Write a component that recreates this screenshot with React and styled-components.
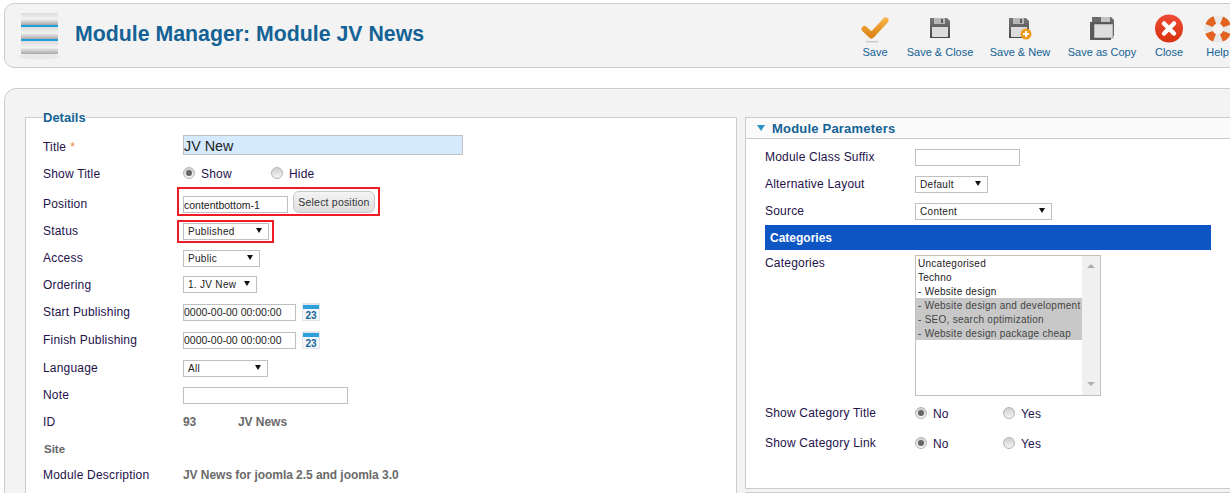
import React from "react";
import styled, { createGlobalStyle } from "styled-components";

const GlobalStyle = createGlobalStyle`
  html, body {
    margin: 0;
    padding: 0;
    background: #fff;
    overflow: hidden;
  }
  * {
    box-sizing: border-box;
  }
`;

const Page = styled.div`
  width: 1230px;
  height: 493px;
  overflow: hidden;
  padding: 3px 0 0 4px;
  font-family: "Liberation Sans", Arial, sans-serif;
  font-size: 12px;
  color: #24124a;
`;

const Header = styled.header`
  width: 1238px;
  height: 65px;
  display: flex;
  align-items: center;
  justify-content: space-between;
  background: #f3f3f3;
  border: 1px solid #ccc;
  border-radius: 10px;
`;

const TitleBlock = styled.div`
  display: flex;
  align-items: center;
  gap: 14px;
  padding-left: 12px;
`;

const PageTitle = styled.h1`
  margin: 0 0 2px;
  font-size: 21.3px;
  font-weight: bold;
  color: #146295;
`;

const Toolbar = styled.nav`
  display: flex;
`;

const ToolItem = styled.a`
  width: ${(p) => p.$w}px;
  height: 64px;
  padding-top: 9px;
  display: flex;
  flex-direction: column;
  align-items: center;
  font-size: 11px;
  color: #146295;
  white-space: nowrap;
`;

const ToolIcon = styled.span`
  height: 33px;
  display: flex;
  align-items: center;
  justify-content: center;
`;

const Main = styled.main`
  width: 1238px;
  height: 420px;
  margin-top: 20px;
  padding: 21px 0 0 20px;
  display: flex;
  align-items: flex-start;
  gap: 8px;
  background: #f3f3f3;
  border: 1px solid #ccc;
  border-radius: 12px;
`;

const Fieldset = styled.fieldset`
  width: 712px;
  height: 400px;
  flex-shrink: 0;
  margin: 0;
  padding: 6px 0 0 17px;
  background: #fff;
  border: 1px solid #ccc;
`;

const Legend = styled.legend`
  margin-left: 0;
  padding: 0;
  font-size: 13px;
  font-weight: bold;
  color: #146295;
`;

const Row = styled.div`
  height: ${(p) => p.$h}px;
  display: flex;
  align-items: center;
`;

const Label = styled.label`
  width: ${(p) => p.$w}px;
  flex-shrink: 0;
  padding-top: ${(p) => p.$drop || 0}px;
  padding-bottom: ${(p) => p.$raise || 0}px;
  letter-spacing: 0.2px;
`;

const Star = styled.span`
  margin-left: 4px;
  color: #ee8a3c;
`;

const TextInput = styled.input`
  width: ${(p) => p.$w}px;
  height: ${(p) => p.$height || 17}px;
  padding: ${(p) => p.$padTop || 0}px 0 0;
  background: ${(p) => p.$bg || "#fff"};
  border: 1px solid #c0c0c0;
  border-radius: 0;
  outline: none;
  font-family: "Liberation Sans", Arial, sans-serif;
  font-size: ${(p) => p.$size || 10.5}px;
  color: #222;
`;

const SelectBox = styled.div`
  width: ${(p) => p.$w}px;
  height: 17px;
  padding: 0 4px;
  display: flex;
  align-items: center;
  justify-content: space-between;
  background: #fff;
  border: 1px solid #c0c0c0;
  font-size: 10px;
  letter-spacing: 0.3px;
  color: #222;
`;

const Arrow = styled.span`
  width: 0;
  height: 0;
  margin-right: 2px;
  margin-bottom: 2px;
  border-left: 3px solid transparent;
  border-right: 3px solid transparent;
  border-top: 5px solid #111;
`;

const Highlight = styled.div`
  margin-left: -6px;
  padding: ${(p) => p.$pad};
  display: flex;
  align-items: flex-end;
  gap: 5px;
  border: 2px solid #ee1c25;
`;

const PositionButton = styled.button`
  width: 82px;
  height: 22px;
  padding: 0;
  background: linear-gradient(#f4f4f4, #dedede);
  border: 1px solid #c8c8c8;
  border-radius: 6px;
  font-family: "Liberation Sans", Arial, sans-serif;
  font-size: 10.5px;
  letter-spacing: 0.2px;
  color: #333;
`;

const RadioDot = styled.span`
  width: 12px;
  height: 12px;
  flex-shrink: 0;
  display: flex;
  align-items: center;
  justify-content: center;
  background: linear-gradient(#cfcfcf, #f5f5f5);
  border: 1px solid #b5b5b5;
  border-radius: 50%;

  &::after {
    content: "";
    width: 6px;
    height: 6px;
    border-radius: 50%;
    background: ${(p) => (p.$on ? "#666" : "transparent")};
  }
`;

const RadioItem = styled.span`
  width: ${(p) => p.$w}px;
  display: flex;
  align-items: center;
  gap: 6px;
  letter-spacing: 0.2px;
`;

const RadioText = styled.span`
  padding-top: 2px;
`;

const DateWrap = styled.div`
  display: flex;
  align-items: center;
  gap: 6px;
`;

const StaticValue = styled.span`
  width: ${(p) => p.$w || "auto"};
  font-weight: bold;
  letter-spacing: -0.05px;
  color: #6a6a6a;
`;

const SiteLabel = styled.span`
  padding-left: 1px;
  color: #666;
  font-size: 11.5px;
  font-weight: bold;
`;

const SideColumn = styled.div`
  flex-shrink: 0;
  margin-top: 7px;
  display: flex;
  flex-direction: column;
  gap: 3px;
`;

const Panel = styled.section`
  width: 500px;
  height: ${(p) => p.$h}px;
  background: #fff;
  border: 1px solid #ccc;
`;

const PanelHead = styled.div`
  height: 21px;
  padding-left: 11px;
  display: flex;
  align-items: center;
  gap: 7px;
  background: #fafafa;
  border-bottom: 1px solid #ccc;
  font-size: 13px;
  font-weight: bold;
  letter-spacing: 0.2px;
  color: #146295;
`;

const Caret = styled.span`
  width: 0;
  height: 0;
  border-left: 4.5px solid transparent;
  border-right: 4.5px solid transparent;
  border-top: 6px solid #2a93c8;
`;

const PanelBody = styled.div`
  padding: 5px 0 0 19px;
`;

const SectionBar = styled.div`
  width: 446px;
  height: 25px;
  margin: 0 0 5px;
  padding-left: 5px;
  display: flex;
  align-items: center;
  background: #0c55c3;
  font-weight: bold;
  color: #fff;
`;

const ListRow = styled.div`
  display: flex;
  align-items: flex-start;
`;

const ListBox = styled.div`
  width: 186px;
  height: 141px;
  display: flex;
  background: #fff;
  border: 1px solid #c0c0c0;
`;

const Options = styled.ul`
  flex: 1;
  margin: 0;
  padding: 0;
  list-style: none;
`;

const Option = styled.li`
  height: 14px;
  padding-left: 2px;
  display: flex;
  align-items: center;
  background: ${(p) => (p.$selected ? "#c8c8c8" : "transparent")};
  font-size: 10px;
  letter-spacing: 0.27px;
  white-space: nowrap;
  color: ${(p) => (p.$selected ? "#444" : "#222")};
`;

const Scrollbar = styled.div`
  width: 18px;
  padding: 8px 0 9px;
  display: flex;
  flex-direction: column;
  align-items: center;
  justify-content: space-between;
  background: #f0f0f0;
`;

const ScrollUp = styled.span`
  border-left: 4px solid transparent;
  border-right: 4px solid transparent;
  border-bottom: 4px solid #b0b0b0;
`;

const ScrollDown = styled.span`
  border-left: 4px solid transparent;
  border-right: 4px solid transparent;
  border-top: 4px solid #b0b0b0;
`;

const ModuleIcon = () => (
  <svg width="44" height="50" viewBox="0 0 44 50">
    <defs>
      <linearGradient id="mBar" x1="0" y1="0" x2="0" y2="1">
        <stop offset="0" stopColor="#dcdcdc" />
        <stop offset="0.5" stopColor="#f2f2f2" />
        <stop offset="1" stopColor="#a8a8a8" />
      </linearGradient>
    </defs>
    <ellipse cx="22" cy="45.5" rx="21" ry="3" fill="#e8e8e8" />
    <rect x="4" y="2" width="37" height="12" fill="url(#mBar)" />
    <rect x="4" y="14" width="37" height="2" fill="#1ea0dc" />
    <rect x="4" y="16" width="37" height="12" fill="url(#mBar)" />
    <rect x="4" y="28" width="37" height="2" fill="#1ea0dc" />
    <rect x="4" y="30" width="37" height="13" fill="url(#mBar)" />
  </svg>
);

const CheckIcon = () => (
  <svg width="28" height="27" viewBox="0 0 28 27">
    <defs>
      <linearGradient id="chk" x1="0" y1="0" x2="0" y2="1">
        <stop offset="0" stopColor="#f5b040" />
        <stop offset="1" stopColor="#dd8518" />
      </linearGradient>
    </defs>
    <path
      d="M3.5 13 L10.5 19.5 L24.5 4.5"
      fill="none"
      stroke="url(#chk)"
      strokeWidth="6"
      strokeLinecap="round"
      strokeLinejoin="round"
    />
    <rect x="5" y="25" width="12" height="1.5" fill="#ccc" />
  </svg>
);

const Floppy = ({ id }) => (
  <>
    <defs>
      <linearGradient id={id} x1="0" y1="0" x2="0" y2="1">
        <stop offset="0" stopColor="#787878" />
        <stop offset="1" stopColor="#474747" />
      </linearGradient>
    </defs>
    <path d="M1 1 H18 L21 4 V21 H1 Z" fill={`url(#${id})`} />
    <rect x="5" y="1" width="11" height="6" fill="#b8b8b8" />
    <rect x="12" y="2" width="2" height="4" fill="#5c5c5c" />
    <rect x="3" y="10" width="16" height="10" fill="#dcdcdc" />
  </>
);

const SaveCloseIcon = () => (
  <svg width="22" height="24" viewBox="0 0 22 24">
    <Floppy id="fA" />
  </svg>
);

const SaveNewIcon = () => (
  <svg width="24" height="24" viewBox="0 0 24 24">
    <Floppy id="fB" />
    <circle cx="18" cy="17" r="5.5" fill="#f09a1c" />
    <path d="M18 14 V20 M15 17 H21" stroke="#fff" strokeWidth="2" />
  </svg>
);

const SaveCopyIcon = () => (
  <svg width="26" height="26" viewBox="0 0 26 26">
    <path d="M3 1 H22 L25 4 V20 H3 Z" fill="#6a6a6a" />
    <rect x="12" y="1" width="9" height="5" fill="#c4c4c4" />
    <rect x="1" y="6" width="21" height="18" fill="#5a5a5a" />
    <rect x="5" y="8" width="19" height="14" fill="#dedede" stroke="#555" strokeWidth="0.5" />
  </svg>
);

const CloseIcon = () => (
  <svg width="30" height="31" viewBox="0 0 30 31">
    <defs>
      <linearGradient id="xRed" x1="0" y1="0" x2="0" y2="1">
        <stop offset="0" stopColor="#ee4b34" />
        <stop offset="1" stopColor="#d9320f" />
      </linearGradient>
    </defs>
    <circle cx="15" cy="14.5" r="14" fill="url(#xRed)" />
    <path d="M10 9.5 L20 19.5 M20 9.5 L10 19.5" stroke="#fff" strokeWidth="4.5" strokeLinecap="round" />
  </svg>
);

const HelpIcon = () => (
  <svg width="28" height="29" viewBox="0 0 28 29">
    <circle cx="14" cy="14" r="9.5" fill="none" stroke="#e8e8e8" strokeWidth="8" />
    <circle
      cx="14"
      cy="14"
      r="9.5"
      fill="none"
      stroke="#e2621f"
      strokeWidth="8"
      strokeDasharray="7.9 7"
      strokeDashoffset="11.4"
    />
  </svg>
);

const CalendarIcon = () => (
  <svg width="18" height="18" viewBox="0 0 18 18">
    <rect width="18" height="18" fill="#dfe7ec" />
    <rect x="1" y="2" width="16" height="4" fill="#2f9fdc" />
    <rect x="1" y="6" width="16" height="11" fill="#f4f8fa" />
    <text x="9" y="15.5" textAnchor="middle" fontFamily="Liberation Sans" fontSize="10" fontWeight="bold" fill="#146295">
      23
    </text>
  </svg>
);

const tools = [
  { label: "Save", w: 50, icon: <CheckIcon /> },
  { label: "Save & Close", w: 80, icon: <SaveCloseIcon /> },
  { label: "Save & New", w: 80, icon: <SaveNewIcon /> },
  { label: "Save as Copy", w: 84, icon: <SaveCopyIcon /> },
  { label: "Close", w: 50, icon: <CloseIcon /> },
  { label: "Help", w: 47, icon: <HelpIcon /> },
];

const categories = [
  { name: "Uncategorised" },
  { name: "Techno" },
  { name: "- Website design" },
  { name: "- Website design and development", selected: true },
  { name: "- SEO, search optimization", selected: true },
  { name: "- Website design package cheap", selected: true },
];

const Select = ({ value, w }) => (
  <SelectBox $w={w}>
    {value}
    <Arrow />
  </SelectBox>
);

const Radio = ({ label, on, w }) => (
  <RadioItem $w={w}>
    <RadioDot $on={on} />
    <RadioText>{label}</RadioText>
  </RadioItem>
);

export default function App() {
  return (
    <Page>
      <GlobalStyle />
      <Header>
        <TitleBlock>
          <ModuleIcon />
          <PageTitle>Module Manager: Module JV News</PageTitle>
        </TitleBlock>
        <Toolbar>
          {tools.map((t) => (
            <ToolItem key={t.label} $w={t.w}>
              <ToolIcon>{t.icon}</ToolIcon>
              {t.label}
            </ToolItem>
          ))}
        </Toolbar>
      </Header>
      <Main>
        <Fieldset>
          <Legend>Details</Legend>
          <Row $h={28}>
            <Label $w={140} $drop={4}>
              Title<Star>*</Star>
            </Label>
            <TextInput $w={280} $height={20} $padTop={2} $bg="#d5eafd" $size={14.3} defaultValue="JV New" />
          </Row>
          <Row $h={27}>
            <Label $w={140} $drop={2}>Show Title</Label>
            <Radio label="Show" on w={88} />
            <Radio label="Hide" w={60} />
          </Row>
          <Row $h={31}>
            <Label $w={140} $drop={4}>Position</Label>
            <Highlight $pad="2px 3px 1px 4px">
              <TextInput $w={105} defaultValue="contentbottom-1" />
              <PositionButton>Select position</PositionButton>
            </Highlight>
          </Row>
          <Row $h={28}>
            <Label $w={140}>Status</Label>
            <Highlight $pad="1px 3px 1px 4px">
              <Select value="Published" w={86} />
            </Highlight>
          </Row>
          <Row $h={26}>
            <Label $w={140}>Access</Label>
            <Select value="Public" w={77} />
          </Row>
          <Row $h={27}>
            <Label $w={140}>Ordering</Label>
            <Select value="1. JV New" w={74} />
          </Row>
          <Row $h={28}>
            <Label $w={140}>Start Publishing</Label>
            <DateWrap>
              <TextInput $w={113} defaultValue="0000-00-00 00:00:00" />
              <CalendarIcon />
            </DateWrap>
          </Row>
          <Row $h={28}>
            <Label $w={140}>Finish Publishing</Label>
            <DateWrap>
              <TextInput $w={113} defaultValue="0000-00-00 00:00:00" />
              <CalendarIcon />
            </DateWrap>
          </Row>
          <Row $h={28}>
            <Label $w={140}>Language</Label>
            <Select value="All" w={85} />
          </Row>
          <Row $h={26}>
            <Label $w={140}>Note</Label>
            <TextInput $w={165} />
          </Row>
          <Row $h={28}>
            <Label $w={140}>ID</Label>
            <StaticValue $w="55px">93</StaticValue>
            <StaticValue>JV News</StaticValue>
          </Row>
          <Row $h={26}>
            <SiteLabel>Site</SiteLabel>
          </Row>
          <Row $h={26}>
            <Label $w={140}>Module Description</Label>
            <StaticValue>JV News for joomla 2.5 and joomla 3.0</StaticValue>
          </Row>
        </Fieldset>
        <SideColumn>
          <Panel $h={372}>
            <PanelHead>
              <Caret />
              Module Parameters
            </PanelHead>
            <PanelBody>
              <Row $h={27}>
                <Label $w={150} $raise={2}>Module Class Suffix</Label>
                <TextInput $w={105} />
              </Row>
              <Row $h={27}>
                <Label $w={150} $raise={2}>Alternative Layout</Label>
                <Select value="Default" w={73} />
              </Row>
              <Row $h={27}>
                <Label $w={150} $raise={2}>Source</Label>
                <Select value="Content" w={137} />
              </Row>
              <SectionBar>Categories</SectionBar>
              <ListRow>
                <Label $w={150} $drop={1}>Categories</Label>
                <ListBox>
                  <Options>
                    {categories.map((c) => (
                      <Option key={c.name} $selected={c.selected}>
                        {c.name}
                      </Option>
                    ))}
                  </Options>
                  <Scrollbar>
                    <ScrollUp />
                    <ScrollDown />
                  </Scrollbar>
                </ListBox>
              </ListRow>
              <Row $h={34}>
                <Label $w={150}>Show Category Title</Label>
                <Radio label="No" on w={88} />
                <Radio label="Yes" w={60} />
              </Row>
              <Row $h={26}>
                <Label $w={150}>Show Category Link</Label>
                <Radio label="No" on w={88} />
                <Radio label="Yes" w={60} />
              </Row>
            </PanelBody>
          </Panel>
          <Panel $h={30} />
        </SideColumn>
      </Main>
    </Page>
  );
}
